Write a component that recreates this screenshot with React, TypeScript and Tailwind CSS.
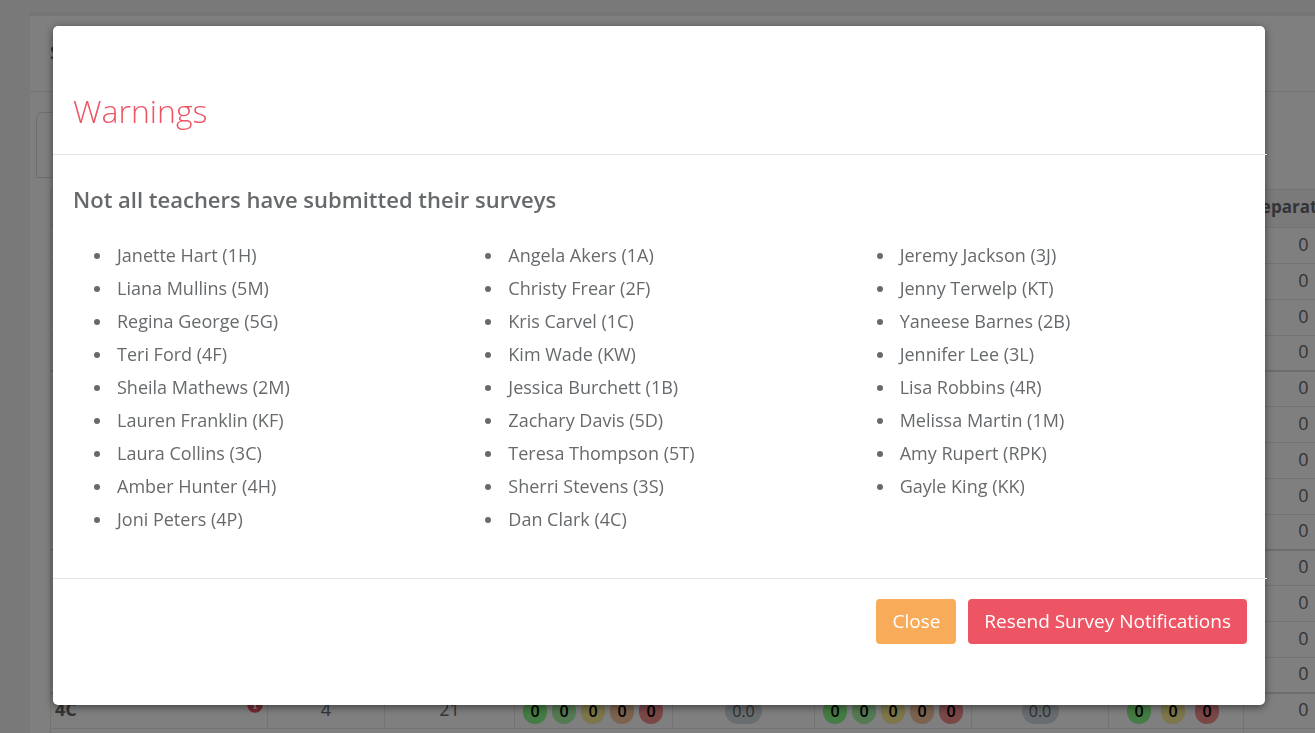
import React from 'react';
import { FaInfoCircle } from 'react-icons/fa';

const teacherColumns = [
  [
    'Janette Hart (1H)',
    'Liana Mullins (5M)',
    'Regina George (5G)',
    'Teri Ford (4F)',
    'Sheila Mathews (2M)',
    'Lauren Franklin (KF)',
    'Laura Collins (3C)',
    'Amber Hunter (4H)',
    'Joni Peters (4P)',
  ],
  [
    'Angela Akers (1A)',
    'Christy Frear (2F)',
    'Kris Carvel (1C)',
    'Kim Wade (KW)',
    'Jessica Burchett (1B)',
    'Zachary Davis (5D)',
    'Teresa Thompson (5T)',
    'Sherri Stevens (3S)',
    'Dan Clark (4C)',
  ],
  [
    'Jeremy Jackson (3J)',
    'Jenny Terwelp (KT)',
    'Yaneese Barnes (2B)',
    'Jennifer Lee (3L)',
    'Lisa Robbins (4R)',
    'Melissa Martin (1M)',
    'Amy Rupert (RPK)',
    'Gayle King (KK)',
  ],
];

// number of classes in each grade above the first visible one
const grades = [4, 5, 4];

const fiveLevels = ['bg-[#8bf788]', 'bg-[#a9f3a6]', 'bg-[#f8ec94]', 'bg-[#f6c6a0]', 'bg-[#f48f8f]'];
const threeLevels = ['bg-[#8bf788]', 'bg-[#f8ec94]', 'bg-[#f48f8f]'];

const Levels: React.FC<{ colors: string[]; gap: string }> = ({ colors, gap }) => (
  <div className={`flex ${gap}`}>
    {colors.map((color) => (
      <span key={color} className={`flex h-[26px] w-6 items-center justify-center rounded-full text-base font-semibold text-black ${color}`}>
        0
      </span>
    ))}
  </div>
);

const Average: React.FC = () => (
  <span className="mx-auto flex h-[26px] w-[37px] items-center justify-center rounded-full bg-[#d1dade] text-base text-[#5e5e5e]">0.0</span>
);

const cell = 'border-x border-[#e7e7e7] pb-[3px]';
const badgeCell = 'border-x border-[#e7e7e7] px-2';

const SurveyTable: React.FC = () => (
  <table className="w-[1313px] table-fixed border-collapse text-center text-lg leading-6">
    <colgroup>
      <col className="w-[217px]" />
      <col className="w-[117px]" />
      <col className="w-[130px]" />
      <col className="w-[158px]" />
      <col className="w-[142px]" />
      <col className="w-[157px]" />
      <col className="w-[137px]" />
      <col className="w-[135px]" />
      <col className="w-[120px]" />
    </colgroup>
    <thead>
      <tr className="h-[38px] border border-[#e7e7e7] bg-[#f5f5f6]">
        <th colSpan={8}></th>
        <th className="pb-1 pl-2 text-left text-[17px] font-bold">Separation</th>
      </tr>
    </thead>
    <tbody>
      {grades.map((count, g) =>
        Array.from({ length: count }, (_, i) => (
          <tr
            key={`${g}-${i}`}
            className={i === count - 1 ? 'h-[35px] border-b-2 border-[#dddddd]' : 'h-[36px] border-b border-[#e7e7e7]'}
          >
            <td colSpan={8} className={cell}></td>
            <td className={cell}>0</td>
          </tr>
        ))
      )}
      <tr className="h-[36px] border-b border-[#e7e7e7]">
        <td className={cell}>
          <div className="flex items-center justify-between px-1">
            <b>4C</b>
            <FaInfoCircle size={16} className="mb-2 text-[#ed5565]" />
          </div>
        </td>
        <td className={cell}>4</td>
        <td className={cell}>21</td>
        <td className={badgeCell}><Levels colors={fiveLevels} gap="gap-[5px]" /></td>
        <td className={badgeCell}><Average /></td>
        <td className={badgeCell}><Levels colors={fiveLevels} gap="gap-[5px]" /></td>
        <td className={badgeCell}><Average /></td>
        <td className="border-x border-[#e7e7e7] px-[18px]"><Levels colors={threeLevels} gap="gap-[10px]" /></td>
        <td className={cell}>0</td>
      </tr>
      <tr className="h-[36px]">
        <td colSpan={8} className={cell}></td>
        <td className={cell}></td>
      </tr>
    </tbody>
  </table>
);

const WarningsDialog: React.FC = () => (
  <div
    role="dialog"
    aria-modal="true"
    aria-labelledby="warnings-title"
    className="rounded-[5px] bg-white pt-16 pb-[61px] shadow-[0_2px_8px_rgba(0,0,0,0.5)]"
  >
    <div className="-mr-0.5 border-b border-[#e5e5e5] px-5 pb-5">
      <h1 id="warnings-title" className="pb-0.5 text-[32px] leading-[42px] font-light text-[#ed5565]">Warnings</h1>
    </div>
    <div className="-mr-0.5 px-5 pt-7 pb-[42px]">
      <h2 className="text-[22px] leading-8 font-semibold">Not all teachers have submitted their surveys</h2>
      <div className="mt-6 grid grid-cols-3">
        {teacherColumns.map((names) => (
          <ul key={names[0]} className="list-disc pl-10 text-lg leading-[33px]">
            {names.map((name) => (
              <li key={name} className="pl-1">{name}</li>
            ))}
          </ul>
        ))}
      </div>
    </div>
    <div className="-mr-0.5 flex justify-end gap-3 border-t border-[#e5e5e5] px-5 pt-5">
      <button type="button" className="rounded bg-[#f8ac59] px-4 py-2 text-[19px] leading-[29px] text-white">Close</button>
      <button type="button" className="rounded bg-[#ed5565] px-4 py-2 text-[19px] leading-[29px] text-white">
        Resend Survey Notifications
      </button>
    </div>
  </div>
);

const App: React.FC = () => {
  return (
    <div className="relative h-screen overflow-hidden bg-[#f3f3f4] font-['Open_Sans',sans-serif] text-[#676a6c]">
      <main className="pt-3 pl-[30px]">
        <section className="border-t-4 border-[#e7eaec] bg-white">
          <div className="flex h-[76px] items-center border-b border-[#e7eaec] pb-1 pl-5">
            <h3 className="text-lg font-semibold">Surveys</h3>
          </div>
          <div className="pt-5 pl-1.5">
            <div className="h-[66px] w-40 rounded-tl-md border border-[#dddddd]"></div>
          </div>
          <div className="pt-[11px] pl-5">
            <SurveyTable />
          </div>
        </section>
      </main>
      <div className="fixed inset-0 bg-black/50 pt-[26px] pr-[50px] pl-[53px]">
        <WarningsDialog />
      </div>
    </div>
  );
};

export default App;
